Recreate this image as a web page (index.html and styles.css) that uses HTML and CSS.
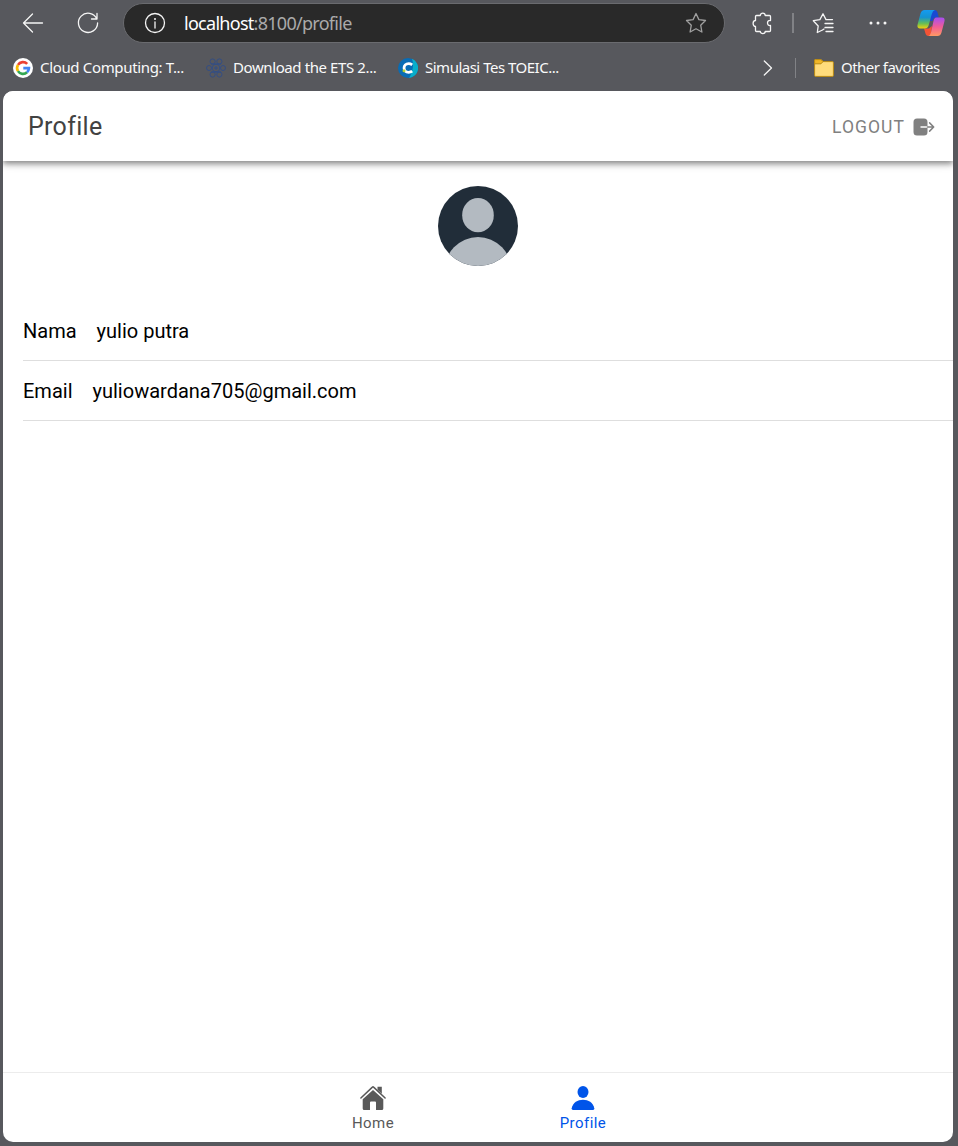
FILE: index.html
```html
<!DOCTYPE html>
<html lang="en">
<head>
<meta charset="utf-8">
<title>Profile</title>
<link rel="stylesheet" href="styles.css">
</head>
<body>
<div class="browser">
  <div class="toolbar">
    <svg class="icon back" viewBox="0 0 24 24"><path d="M21.500 12H2.500M11.500 3L2.500 12L11.500 21"/></svg>
    <svg class="icon reload" viewBox="0 0 24 24"><path d="M20.800 8A9.600 9.600 0 1 0 21.600 12M21 2.500V8H15.500"/></svg>
    <div class="address">
      <svg class="icon info" viewBox="0 0 24 24"><circle cx="12" cy="12" r="9.500"/><path d="M12 11V17"/><circle class="dot" cx="12" cy="8" r="1"/></svg>
      <span class="url"><span class="host">localhost</span>:8100/profile</span>
      <svg class="icon star" viewBox="0 0 24 24"><path d="M12 2.500L14.900 8.600L21.500 9.500L16.700 14.200L17.900 21L12 17.800L6.100 21L7.300 14.200L2.500 9.500L9.100 8.600Z"/></svg>
    </div>
    <svg class="icon extensions" viewBox="0 0 24 24"><path d="M5.500 4.500H9.300C9.300 1.300 14.200 1.300 14.200 4.500H18.500Q19.500 4.500 19.500 5.500V9.500C15.500 8.800 15.500 15.200 19.500 14.500V19.500Q19.500 20.500 18.500 20.500H14.200C14.200 23.200 9.300 23.200 9.300 20.500H5.500Q4.500 20.500 4.500 19.500V15.500C1.300 15.500 1.300 9.500 4.500 9.500V5.500Q4.500 4.500 5.500 4.500Z"/></svg>
    <span class="divider"></span>
    <svg class="icon favorites" viewBox="0 0 24 24"><path d="M11.500 19L6.300 21.500L7.200 15L2.300 9.700L8.900 8.600L12 2.800L15 8.600H21.500M14 12.500H22M14 16.500H22M15 20.500H22M11.500 19L13 18"/></svg>
    <svg class="icon more" viewBox="0 0 24 24"><circle class="dot" cx="5" cy="12" r="1.500"/><circle class="dot" cx="12" cy="12" r="1.500"/><circle class="dot" cx="19" cy="12" r="1.500"/></svg>
    <svg class="copilot" viewBox="0 0 28 28">
      <defs>
        <linearGradient id="cool" x1="0" y1="0" x2="0" y2="1"><stop offset="0" stop-color="#159bf0"/><stop offset=".4" stop-color="#1593d0"/><stop offset=".72" stop-color="#63bd58"/><stop offset="1" stop-color="#f3d20a"/></linearGradient>
        <linearGradient id="warm" x1="0" y1="0" x2="0" y2="1"><stop offset="0" stop-color="#a64df2"/><stop offset=".5" stop-color="#f05c98"/><stop offset="1" stop-color="#ff9a62"/></linearGradient>
      </defs>
      <path fill="#1949d2" d="M14 1H17.500Q20 1 20.700 4L21.800 8.500H18.500Q16.500 8.500 15.500 12L13 12Z"/>
      <path fill="#f45335" d="M7 19.500H12L15 17L14 27H11.500Q9 27 8.300 24Z"/>
      <path fill="url(#cool)" d="M7.500 1H18Q15.700 1.500 14.800 5L11.600 16.500Q10.700 19.500 7.800 19.500H3Q-.3 19.500 .6 15.500L3.500 4.500Q4.500 1 7.500 1Z"/>
      <path fill="url(#warm)" d="M19.200 8.500H25Q28.300 8.500 27.400 12.500L24.500 23.500Q23.500 27 20.500 27H11.500Q13.200 26.500 14 23.500L16.500 12Q17.200 8.500 19.200 8.500Z"/>
    </svg>
  </div>
  <div class="bookmarks">
    <div class="bookmark cloud">
      <svg class="favicon" viewBox="0 0 20 20"><circle cx="10" cy="10" r="10" fill="#fff"/><g fill="none" stroke-width="2.700"><path stroke="#ea4335" d="M5 6.900A5.900 5.900 0 0 1 14.200 5.900"/><path stroke="#fbbc05" d="M5 13.100A5.900 5.900 0 0 1 5 6.900"/><path stroke="#34a853" d="M14 14.300A5.900 5.900 0 0 1 5 13.100"/><path stroke="#4285f4" d="M10.300 10.200H15.900A5.900 5.900 0 0 1 14 14.300"/></g></svg>
      <span>Cloud Computing: T...</span>
    </div>
    <div class="bookmark download">
      <svg class="favicon" viewBox="0 0 20 20"><g fill="none" stroke="#304d88" stroke-width=".9"><circle cx="10" cy="10" r="3.800"/><circle cx="6.600" cy="3.500" r="2.600"/><circle cx="13.400" cy="3.500" r="2.600"/><circle cx="17" cy="10" r="2.500"/><circle cx="13.400" cy="16.500" r="2.600"/><circle cx="6.600" cy="16.500" r="2.600"/><circle cx="3" cy="10" r="2.500"/><path d="M8 10H12M10 8V12M5 6H15M5 14H15"/></g></svg>
      <span>Download the ETS 2...</span>
    </div>
    <div class="bookmark toeic">
      <svg class="favicon" viewBox="0 0 20 20"><circle cx="10" cy="10" r="10" fill="#086cb5"/><path fill="#08aeca" d="M14 .8A10 10 0 0 1 11 20Q17 10 14 .8Z"/><path fill="none" stroke="#fff" stroke-width="2.800" d="M14.200 6.900Q12.500 5.700 10.700 5.700C4.500 5.700 4.500 14.300 10.700 14.300Q12.700 14.300 14.200 13.200"/><circle cx="6" cy="12.800" r="1.500" fill="#b5d532"/></svg>
      <span>Simulasi Tes TOEIC...</span>
    </div>
    <svg class="icon chevron" viewBox="0 0 24 24"><path d="M8.300 5L15.500 12L8.300 19"/></svg>
    <span class="divider thin"></span>
    <div class="bookmark other">
      <svg class="folder" viewBox="0 0 20 18"><path fill="#ffdc7c" stroke="#b98a14" d="M.6 1.500Q.6 .6 1.500 .6H7L9 2.600H18.400Q19.400 2.600 19.400 3.600V16.400Q19.400 17.400 18.400 17.400H1.600Q.6 17.400 .6 16.400Z"/><path fill="#f1b727" stroke="#b98a14" d="M.6 1.500Q.6 .6 1.500 .6H7L9 2.600L7 4.800H.6Z"/></svg>
      <span>Other favorites</span>
    </div>
  </div>
  <div class="page">
    <header class="header">
      <h1 class="title">Profile</h1>
      <div class="logout"><span>LOGOUT</span>
        <svg class="exit" viewBox="0 0 22 18"><path d="M4 .5H11Q14.500 .5 14.500 4V8.300H7.500V9.700H14.500V14Q14.500 17.500 11 17.500H4Q.5 17.500 .5 14V4Q.5 .5 4 .5Z"/><path class="arrow" d="M14.500 9H20.500M16.600 4.900L20.700 9L16.600 13.100"/></svg>
      </div>
    </header>
    <main class="content">
      <svg class="avatar" viewBox="0 0 80 80"><defs><clipPath id="round"><circle cx="40" cy="40" r="40"/></clipPath></defs><g clip-path="url(#round)"><path fill="#212d39" d="M0 0H80V80H0Z"/><ellipse cx="40" cy="29.200" rx="15.800" ry="17.100" fill="#b3bac1"/><ellipse cx="40" cy="86" rx="34" ry="35" fill="#b3bac1"/></g></svg>
      <div class="list">
        <div class="item"><span>Nama</span><span>yulio putra</span></div>
        <div class="item"><span>Email</span><span>yuliowardana705@gmail.com</span></div>
      </div>
    </main>
    <nav class="tabs">
      <div class="tab">
        <svg class="tab-icon" viewBox="0 0 30 30"><path d="M15 6.900L25.300 16.200V25.500Q25.300 27 23.800 27H18V19.500Q18 18.500 17 18.500H13Q12 18.500 12 19.500V27H6.200Q4.700 27 4.700 25.500V16.200Z"/><path d="M19.500 3.800H23.800V10.700L19.500 6.800Z"/><path class="roof" d="M2.900 15L14.400 4.100Q15 3.500 15.600 4.100L27.100 15"/></svg>
        <span>Home</span>
      </div>
      <div class="tab active">
        <svg class="tab-icon" viewBox="0 0 30 30"><ellipse cx="15" cy="9" rx="5.500" ry="6"/><path d="M3.700 25.300C5 19.500 9.500 16.800 15 16.800S25 19.500 26.300 25.300Q26.500 27 25 27H5Q3.500 27 3.700 25.300Z"/></svg>
        <span>Profile</span>
      </div>
    </nav>
  </div>
</div>
</body>
</html>
```

FILE: styles.css
```css
* { box-sizing: border-box; }
body { margin: 0; background: #57585d; font-family: Roboto, "Liberation Sans", sans-serif; }
svg { display: block; flex: none; }
.browser { display: flex; flex-direction: column; width: 958px; height: 1146px; overflow: hidden; }
.toolbar { display: flex; align-items: center; height: 46px; padding-left: 21px; flex: none; }
.icon { width: 24px; height: 24px; fill: none; stroke: #f5f5f5; stroke-width: 1.3; stroke-linejoin: round; stroke-linecap: round; }
.icon .dot { fill: #f5f5f5; stroke: none; }
.reload { margin-left: 31px; }
.address { display: flex; align-items: center; width: 602px; height: 40px; margin-left: 23px; padding: 0 16px 0 19px; border: 1px solid #6a6b6f; border-radius: 20px; background: #292929; }
.url { flex: 1; margin-left: 17px; color: #aaa; font: 18px/24px "Noto Sans", sans-serif; letter-spacing: -0.72px; padding-bottom: 1px; }
.host { color: #fff; }
.star { stroke: #a0a0a0; }
.extensions { margin-left: 26px; }
.divider { width: 2px; height: 20px; margin-left: 17px; background: #818286; }
.favorites { margin-left: 17px; }
.more { margin-left: 31px; }
.copilot { width: 28px; height: 28px; margin-left: 27px; }
.bookmarks { display: flex; align-items: center; height: 45px; padding: 0 0 1px 13px; flex: none; color: #fafafa; font: 15px/20px "Noto Sans", sans-serif; }
.bookmark { display: flex; align-items: center; gap: 7px; white-space: nowrap; letter-spacing: -0.5px; }
.bookmark span { padding-bottom: 2px; }
.favicon { width: 20px; height: 20px; }
.cloud { width: 193px; letter-spacing: -0.34px; }
.download { width: 192px; letter-spacing: -0.4px; }
.toeic { width: 358px; }
.thin { width: 1px; margin-left: 15px; }
.folder { width: 20px; height: 18px; }
.other { margin-left: 18px; letter-spacing: -0.52px; }
.page { display: flex; flex-direction: column; width: 950px; height: 1051px; margin-left: 3px; border-radius: 10px; overflow: hidden; background: #fff; }
.header { display: flex; align-items: center; justify-content: space-between; height: 70px; flex: none; padding: 2px 18px 0 25px; background: #fff; box-shadow: 0 2px 5px rgba(0,0,0,.28), 0 4px 6px rgba(0,0,0,.18), 0 1px 12px rgba(0,0,0,.12); }
.title { margin: 0; color: #424242; font-size: 25px; font-weight: 400; line-height: 30px; letter-spacing: .31px; }
.logout { display: flex; align-items: center; gap: 8px; color: #808080; font-size: 17.5px; letter-spacing: 1.05px; }
.exit { width: 22px; height: 18px; fill: #808080; }
.exit .arrow { fill: none; stroke: #808080; stroke-width: 1.5; stroke-linecap: round; stroke-linejoin: round; }
.content { flex: 1; padding-top: 25px; }
.avatar { width: 80px; height: 80px; margin: 0 auto; }
.list { margin: 35px 0 0 20px; color: #000; font-size: 20px; }
.item { display: flex; align-items: center; gap: 20px; height: 60px; border-bottom: 1px solid #dedede; }
.tabs { display: flex; justify-content: center; height: 70px; flex: none; border-top: 1px solid #ececec; color: #595959; }
.tab { display: flex; flex-direction: column; align-items: center; width: 210px; padding-top: 10px; font-size: 15px; line-height: 20px; letter-spacing: .45px; }
.tab-icon { width: 30px; height: 30px; fill: currentColor; }
.roof { fill: none; stroke: currentColor; stroke-width: 1.5; stroke-linecap: round; }
.active { color: #0054e9; }
```
